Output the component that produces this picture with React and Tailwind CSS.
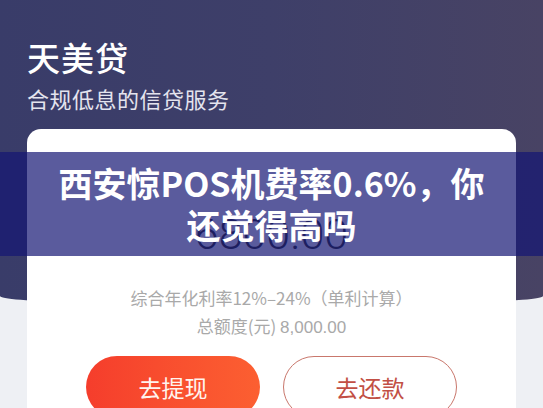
const App = () => {
  return (
    <div
      className="relative w-[543px] h-[408px] overflow-hidden bg-[#eef0f4]"
      style={{ fontFamily: '"Noto Sans CJK SC", "Noto Sans", sans-serif' }}
    >
      {/* Header */}
      <div className="h-[306px] rounded-b-[50%_10px] bg-gradient-to-r from-[#393c69] via-[#3e3f69] to-[#484364] px-[27px] pt-[38px]">
        <h1 className="text-[33px] leading-[38px] font-medium text-white tracking-[1px]">天美贷</h1>
        <p className="mt-[8px] text-[22px] leading-[28px] text-[#e4e4ee] tracking-[0.5px]">合规低息的信贷服务</p>
      </div>

      {/* Card */}
      <div className="-mt-[177px] mx-[27px] h-[320px] rounded-t-[14px] bg-white flex flex-col items-center pt-[78px]">
        <div
          className="text-[43px] leading-[54px] font-light text-[#333]"
          style={{ fontFamily: 'Roboto, "Liberation Sans", sans-serif' }}
        >
          6800.00
        </div>
        <div className="mt-[23px] text-[17px] leading-[28px] text-[#a9a9a9] text-center">
          <p>综合年化利率12%–24%（单利计算）</p>
          <p>
            总额度(元) <span style={{ fontFamily: '"Liberation Sans", sans-serif' }}>8,000.00</span>
          </p>
        </div>
        <div className="mt-[14px] flex gap-[23px]">
          <button className="w-[174px] h-[62px] rounded-full bg-gradient-to-r from-[#f53d2c] to-[#fc5f31] text-[23px] text-[#fff4ee]">
            去提现
          </button>
          <button className="w-[174px] h-[62px] rounded-full border-[1.5px] border-[#c9776c] text-[23px] text-[#c24f45]">
            去还款
          </button>
        </div>
      </div>

      {/* Title banner overlay */}
      <div className="absolute left-0 right-0 top-[152px] h-[104px] bg-[rgba(20,22,115,0.7)] flex items-center justify-center">
        <h2 className="max-w-[440px] text-center text-[34px] leading-[42px] font-bold text-white">
          西安惊POS机费率0.6%，你还觉得高吗
        </h2>
      </div>
    </div>
  );
};

export default App;
